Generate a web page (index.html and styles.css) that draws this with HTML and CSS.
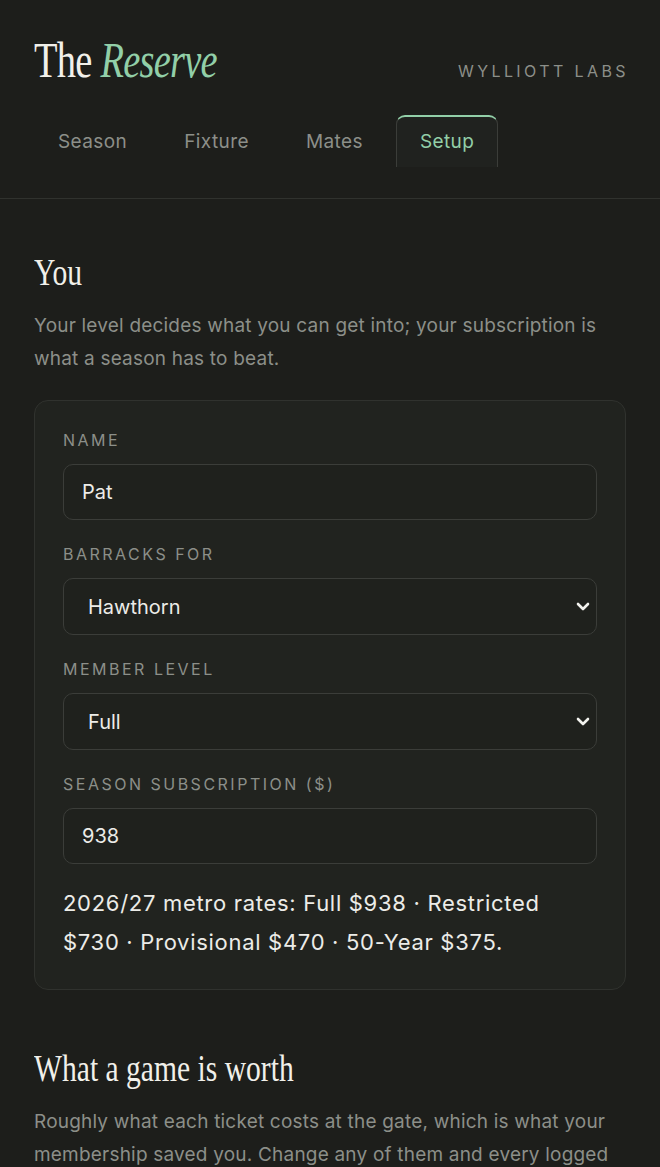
FILE: index.html
```html
<!DOCTYPE html>
<html lang="en">

<head>
  <meta charset="UTF-8" />
  <meta name="viewport" content="width=device-width, initial-scale=1.0" />
  <title>The Reserve · Setup</title>
  <link rel="stylesheet" href="styles.css">
</head>

<body>

  <header class="header">
    <div class="brand-row">
      <h1 class="brand"><span class="brand-inner">The <em>Reserve</em></span></h1>
      <div class="maker">WYLLIOTT LABS</div>
    </div>
    <nav class="tabs">
      <a class="tab" href="#">Season</a>
      <a class="tab" href="#">Fixture</a>
      <a class="tab" href="#">Mates</a>
      <a class="tab active" href="#">Setup</a>
    </nav>
  </header>

  <main class="page">
    <section class="section">
      <h2 class="section-title"><span>You</span></h2>
      <p class="lede">Your level decides what you can get into; your subscription is what a season has to beat.</p>

      <div class="card">
        <div class="field">
          <label for="name">Name</label>
          <input type="text" id="name" value="Pat" />
        </div>

        <div class="field">
          <label for="team">Barracks for</label>
          <div class="select-wrap">
            <select id="team">
              <option>Adelaide</option>
              <option>Brisbane</option>
              <option>Carlton</option>
              <option>Collingwood</option>
              <option>Essendon</option>
              <option>Geelong</option>
              <option selected>Hawthorn</option>
              <option>Melbourne</option>
              <option>Richmond</option>
            </select>
            <svg class="chevron" width="14" height="9" viewBox="0 0 14 9"><path d="M2 2l5 5 5-5" fill="none" stroke="#f2f2ee" stroke-width="2.6" stroke-linecap="round" stroke-linejoin="round"/></svg>
          </div>
        </div>

        <div class="field">
          <label for="level">Member level</label>
          <div class="select-wrap">
            <select id="level">
              <option selected>Full</option>
              <option>Restricted</option>
              <option>Provisional</option>
              <option>50-Year</option>
            </select>
            <svg class="chevron" width="14" height="9" viewBox="0 0 14 9"><path d="M2 2l5 5 5-5" fill="none" stroke="#f2f2ee" stroke-width="2.6" stroke-linecap="round" stroke-linejoin="round"/></svg>
          </div>
        </div>

        <div class="field">
          <label for="sub">Season subscription ($)</label>
          <input type="text" id="sub" value="938" />
        </div>

        <p class="note">2026/27 metro rates: Full $938 · Restricted $730 · Provisional $470 · 50-Year $375.</p>
      </div>
    </section>

    <section class="section">
      <h2 class="section-title"><span>What a game is worth</span></h2>
      <p class="lede">Roughly what each ticket costs at the gate, which is what your membership saved you. Change any of them and every logged game is re-valued.</p>

      <div class="card">
        <div class="field">
          <label for="gen">General admission ($)</label>
          <input type="text" id="gen" value="30" />
        </div>
        <div class="field">
          <label for="res">Reserved seat ($)</label>
          <input type="text" id="res" value="55" />
        </div>
      </div>
    </section>
  </main>

</body>

</html>
```

FILE: styles.css
```css
:root {
  --bg: #1d1e1b;
  --card: #21231f;
  --line: #30322e;
  --field-line: #3b3d39;
  --text: #ecece8;
  --muted: #8c8f89;
  --mint: #92cfa8;
}

* {
  box-sizing: border-box;
}

body {
  margin: 0;
  background: var(--bg);
  color: var(--text);
  font-family: Inter, 'Noto Sans', sans-serif;
}

.header {
  padding: 35px 34px 31px;
  border-bottom: 1px solid var(--line);
}

.brand-row {
  display: flex;
  justify-content: space-between;
  align-items: baseline;
}

.brand {
  margin: 0;
  font-family: 'Liberation Serif', serif;
  font-weight: 400;
  font-size: 50px;
  line-height: 50px;
  letter-spacing: -1px;
  color: #f1f0ea;
}

.brand-inner {
  display: inline-block;
  transform: scaleX(0.77);
  transform-origin: left center;
  white-space: nowrap;
}

.brand em {
  color: var(--mint);
}

.maker {
  margin-right: -3px;
  font-size: 16px;
  letter-spacing: 3.4px;
  color: var(--muted);
}

.tabs {
  display: flex;
  gap: 9px;
  margin-top: 30px;
}

.tab {
  padding: 14px 23px 13px;
  border: 1px solid transparent;
  border-bottom: none;
  border-radius: 9px 9px 0 0;
  font-size: 19px;
  line-height: 24px;
  letter-spacing: 0.4px;
  color: var(--muted);
  text-decoration: none;
}

.tab.active {
  border-color: var(--field-line);
  border-top: 2px solid var(--mint);
  padding-top: 13px;
  color: var(--mint);
  background: #20221f;
}

.page {
  padding: 0 34px 40px;
}

.section {
  padding-top: 52px;
}

.section + .section {
  padding-top: 57px;
}

.section-title {
  margin: 0;
  font-family: 'Liberation Serif', serif;
  font-weight: 400;
  font-size: 37px;
  line-height: 44px;
  color: #f1f0ea;
}

.section-title span {
  display: inline-block;
  transform: scaleX(0.8);
  transform-origin: left center;
  white-space: nowrap;
}

.lede {
  margin: 14px 0 0;
  font-size: 19px;
  line-height: 33px;
  letter-spacing: 0.2px;
  color: var(--muted);
}

.card {
  margin-top: 25px;
  padding: 29px 28px 27px;
  background: var(--card);
  border: 1px solid var(--line);
  border-radius: 14px;
}

.field {
  display: flex;
  flex-direction: column;
  gap: 14px;
  margin-bottom: 24px;
}

.field label {
  font-size: 16px;
  line-height: 20px;
  letter-spacing: 2.5px;
  text-transform: uppercase;
  color: var(--muted);
}

.field input,
.field select {
  width: 100%;
  height: 56px;
  padding: 0 18px;
  background: #1f211d;
  border: 1px solid var(--field-line);
  border-radius: 10px;
  font-family: inherit;
  font-size: 20px;
  color: var(--text);
  outline: none;
}

.select-wrap {
  position: relative;
}

.field select {
  height: 57px;
  padding-left: 24px;
  appearance: none;
  -webkit-appearance: none;
}

.chevron {
  position: absolute;
  right: 7px;
  top: 24px;
  pointer-events: none;
}

.note {
  margin: -4px 0 0;
  font-size: 22px;
  line-height: 39px;
  letter-spacing: 0.7px;
  color: var(--text);
}
```
